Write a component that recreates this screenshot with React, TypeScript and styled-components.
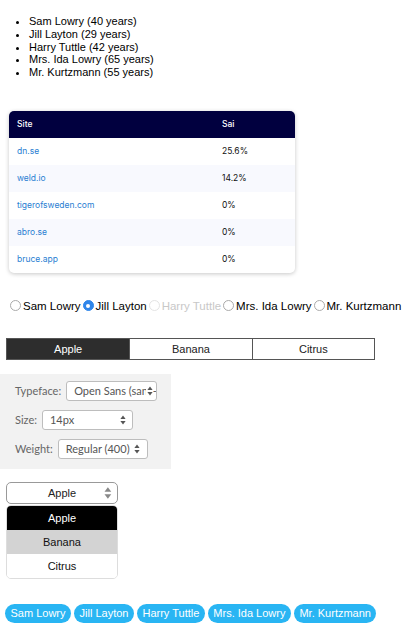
import React from 'react'
import styled, { createGlobalStyle } from 'styled-components'

const GlobalStyle = createGlobalStyle`
  body {
    margin: 0;
    background: #fff;
    font-family: 'Liberation Sans', Arial, sans-serif;
    color: #000;
  }
`

const people = [
  { name: 'Sam Lowry', age: 40 },
  { name: 'Jill Layton', age: 29 },
  { name: 'Harry Tuttle', age: 42, disabled: true },
  { name: 'Mrs. Ida Lowry', age: 65 },
  { name: 'Mr. Kurtzmann', age: 55 },
]

const sites = [
  { site: 'dn.se', sai: '25.6%' },
  { site: 'weld.io', sai: '14.2%' },
  { site: 'tigerofsweden.com', sai: '0%' },
  { site: 'abro.se', sai: '0%' },
  { site: 'bruce.app', sai: '0%' },
]

const fruits = ['Apple', 'Banana', 'Citrus']

const Page = styled.div`
  display: flex;
  flex-direction: column;
  align-items: flex-start;
  width: 415px;
  font-size: 11px;
`

const PeopleList = styled.ul`
  margin: 15px 0 0 8px;
  padding-left: 21px;
  line-height: 12.8px;
`

const TableCard = styled.div`
  margin: 32px 0 0 9px;
  width: 286px;
  border-radius: 5px;
  overflow: hidden;
  background: #fff;
  box-shadow: 0 1px 4px rgba(0, 0, 0, 0.22);
  font-family: Inter, 'Noto Sans', sans-serif;
  font-size: 8.5px;
`

const Table = styled.table`
  width: 100%;
  border-collapse: collapse;
  th {
    background: #01003f;
    color: #fff;
    font-weight: 500;
    text-align: left;
    height: 27px;
    padding: 0 8px;
  }
  td {
    height: 27px;
    padding: 0 8px;
    color: #111;
  }
  th:first-child,
  td:first-child {
    width: 189px;
  }
  tbody tr:nth-child(even) td {
    background: #f8f9fe;
  }
`

const SiteLink = styled.a`
  color: #2a80d2;
  text-decoration: none;
`

const RadioRow = styled.div`
  display: flex;
  align-items: center;
  margin: 27px 0 0 10px;
  font-size: 11.5px;
`

const RadioLabel = styled.label<{ $disabled?: boolean }>`
  display: flex;
  align-items: center;
  color: ${(p) => (p.$disabled ? '#c8c8c8' : '#000')};
  margin-right: 2px;
  white-space: nowrap;
`

const RadioDot = styled.span<{ $checked?: boolean; $disabled?: boolean }>`
  box-sizing: border-box;
  width: 11px;
  height: 11px;
  border-radius: 50%;
  margin-right: 2px;
  border: 1px solid ${(p) => (p.$checked ? '#2f86ea' : p.$disabled ? '#e4e4e4' : '#aaa')};
  background: ${(p) => (p.$checked ? '#2f86ea' : '#fff')};
  display: flex;
  align-items: center;
  justify-content: center;
  &::after {
    content: '';
    width: 4px;
    height: 4px;
    border-radius: 50%;
    background: ${(p) => (p.$checked ? '#fff' : 'transparent')};
  }
`

const Segmented = styled.div`
  display: grid;
  grid-template-columns: repeat(3, 1fr);
  margin: 26px 0 0 6px;
  width: 369px;
  height: 22px;
  box-sizing: border-box;
  border: 1px solid #555;
`

const Segment = styled.div<{ $active?: boolean }>`
  display: flex;
  align-items: center;
  justify-content: center;
  background: ${(p) => (p.$active ? '#2d2d2d' : '#fff')};
  color: ${(p) => (p.$active ? '#fff' : '#222')};
  & + & {
    border-left: 1px solid #555;
  }
`

const FontPanel = styled.div`
  margin-top: 14px;
  width: 171px;
  height: 95px;
  box-sizing: border-box;
  background: #f2f2f2;
  padding: 7px 0 0 15px;
  display: flex;
  flex-direction: column;
  gap: 9px;
  font-family: Lato, 'Open Sans', sans-serif;
  font-size: 11px;
  color: #666;
`

const FieldRow = styled.div`
  display: flex;
  align-items: center;
  gap: 5px;
`

const FieldSelect = styled.div<{ $width: number }>`
  position: relative;
  box-sizing: border-box;
  width: ${(p) => p.$width}px;
  height: 20px;
  border: 1px solid #bdbdbd;
  border-radius: 3px;
  background: #fff;
  color: #555;
  display: flex;
  align-items: center;
  padding: 0 16px 0 7px;
  overflow: hidden;
  white-space: nowrap;
`

const ArrowSlot = styled.span<{ $right: number }>`
  position: absolute;
  right: ${(p) => p.$right}px;
  top: 50%;
  transform: translateY(-50%);
  display: flex;
  background: #fff;
  padding-left: 1px;
`

const FruitPicker = styled.div`
  margin: 13px 0 0 6px;
  width: 112px;
  display: flex;
  flex-direction: column;
`

const PickerButton = styled.div`
  position: relative;
  box-sizing: border-box;
  height: 22px;
  border: 1px solid #999;
  border-radius: 5px;
  display: flex;
  align-items: center;
  justify-content: center;
  color: #222;
`

const OptionList = styled.div`
  margin-top: 1px;
  border: 1px solid #ddd;
  border-radius: 5px;
  overflow: hidden;
`

const Option = styled.div<{ $state?: 'selected' | 'hover' }>`
  height: 24px;
  display: flex;
  align-items: center;
  justify-content: center;
  background: ${(p) => (p.$state === 'selected' ? '#000' : p.$state === 'hover' ? '#d3d3d3' : '#fff')};
  color: ${(p) => (p.$state === 'selected' ? '#fff' : '#111')};
`

const ChipRow = styled.div`
  display: flex;
  gap: 3px;
  margin: 25px 0 0 5px;
`

const Chip = styled.span`
  height: 19px;
  padding: 0 5.5px;
  border-radius: 10px;
  background: #29b5f3;
  color: #fff;
  display: flex;
  align-items: center;
  white-space: nowrap;
`

const Arrows = ({ size = 1, color = '#555' }: { size?: number; color?: string }) => (
  <svg width={6 * size} height={10 * size} viewBox="0 0 6 10">
    <path d="M3 0.5 L5.6 4 H0.4 Z" fill={color} />
    <path d="M3 9.5 L5.6 6 H0.4 Z" fill={color} />
  </svg>
)

const App = () => {
  return (
    <Page>
      <GlobalStyle />
      <PeopleList>
        {people.map((p) => (
          <li key={p.name}>
            {p.name} ({p.age} years)
          </li>
        ))}
      </PeopleList>

      <TableCard>
        <Table>
          <thead>
            <tr>
              <th>Site</th>
              <th>Sai</th>
            </tr>
          </thead>
          <tbody>
            {sites.map((s) => (
              <tr key={s.site}>
                <td>
                  <SiteLink href="#">{s.site}</SiteLink>
                </td>
                <td>{s.sai}</td>
              </tr>
            ))}
          </tbody>
        </Table>
      </TableCard>

      <RadioRow>
        {people.map((p) => (
          <RadioLabel key={p.name} $disabled={p.disabled}>
            <RadioDot $checked={p.name === 'Jill Layton'} $disabled={p.disabled} />
            {p.name}
          </RadioLabel>
        ))}
      </RadioRow>

      <Segmented>
        {fruits.map((f) => (
          <Segment key={f} $active={f === 'Apple'}>
            {f}
          </Segment>
        ))}
      </Segmented>

      <FontPanel>
        <FieldRow>
          Typeface:
          <FieldSelect $width={91}>
            Open Sans (sans-serif)
            <ArrowSlot $right={3}>
              <Arrows />
            </ArrowSlot>
          </FieldSelect>
        </FieldRow>
        <FieldRow>
          Size:
          <FieldSelect $width={91}>
            14px
            <ArrowSlot $right={6}>
              <Arrows />
            </ArrowSlot>
          </FieldSelect>
        </FieldRow>
        <FieldRow>
          Weight:
          <FieldSelect $width={90}>
            Regular (400)
            <ArrowSlot $right={7}>
              <Arrows />
            </ArrowSlot>
          </FieldSelect>
        </FieldRow>
      </FontPanel>

      <FruitPicker>
        <PickerButton>
          Apple
          <ArrowSlot $right={5}>
            <Arrows size={1.3} color="#888" />
          </ArrowSlot>
        </PickerButton>
        <OptionList>
          {fruits.map((f, i) => (
            <Option key={f} $state={i === 0 ? 'selected' : i === 1 ? 'hover' : undefined}>
              {f}
            </Option>
          ))}
        </OptionList>
      </FruitPicker>

      <ChipRow>
        {people.map((p) => (
          <Chip key={p.name}>{p.name}</Chip>
        ))}
      </ChipRow>
    </Page>
  )
}

export default App
